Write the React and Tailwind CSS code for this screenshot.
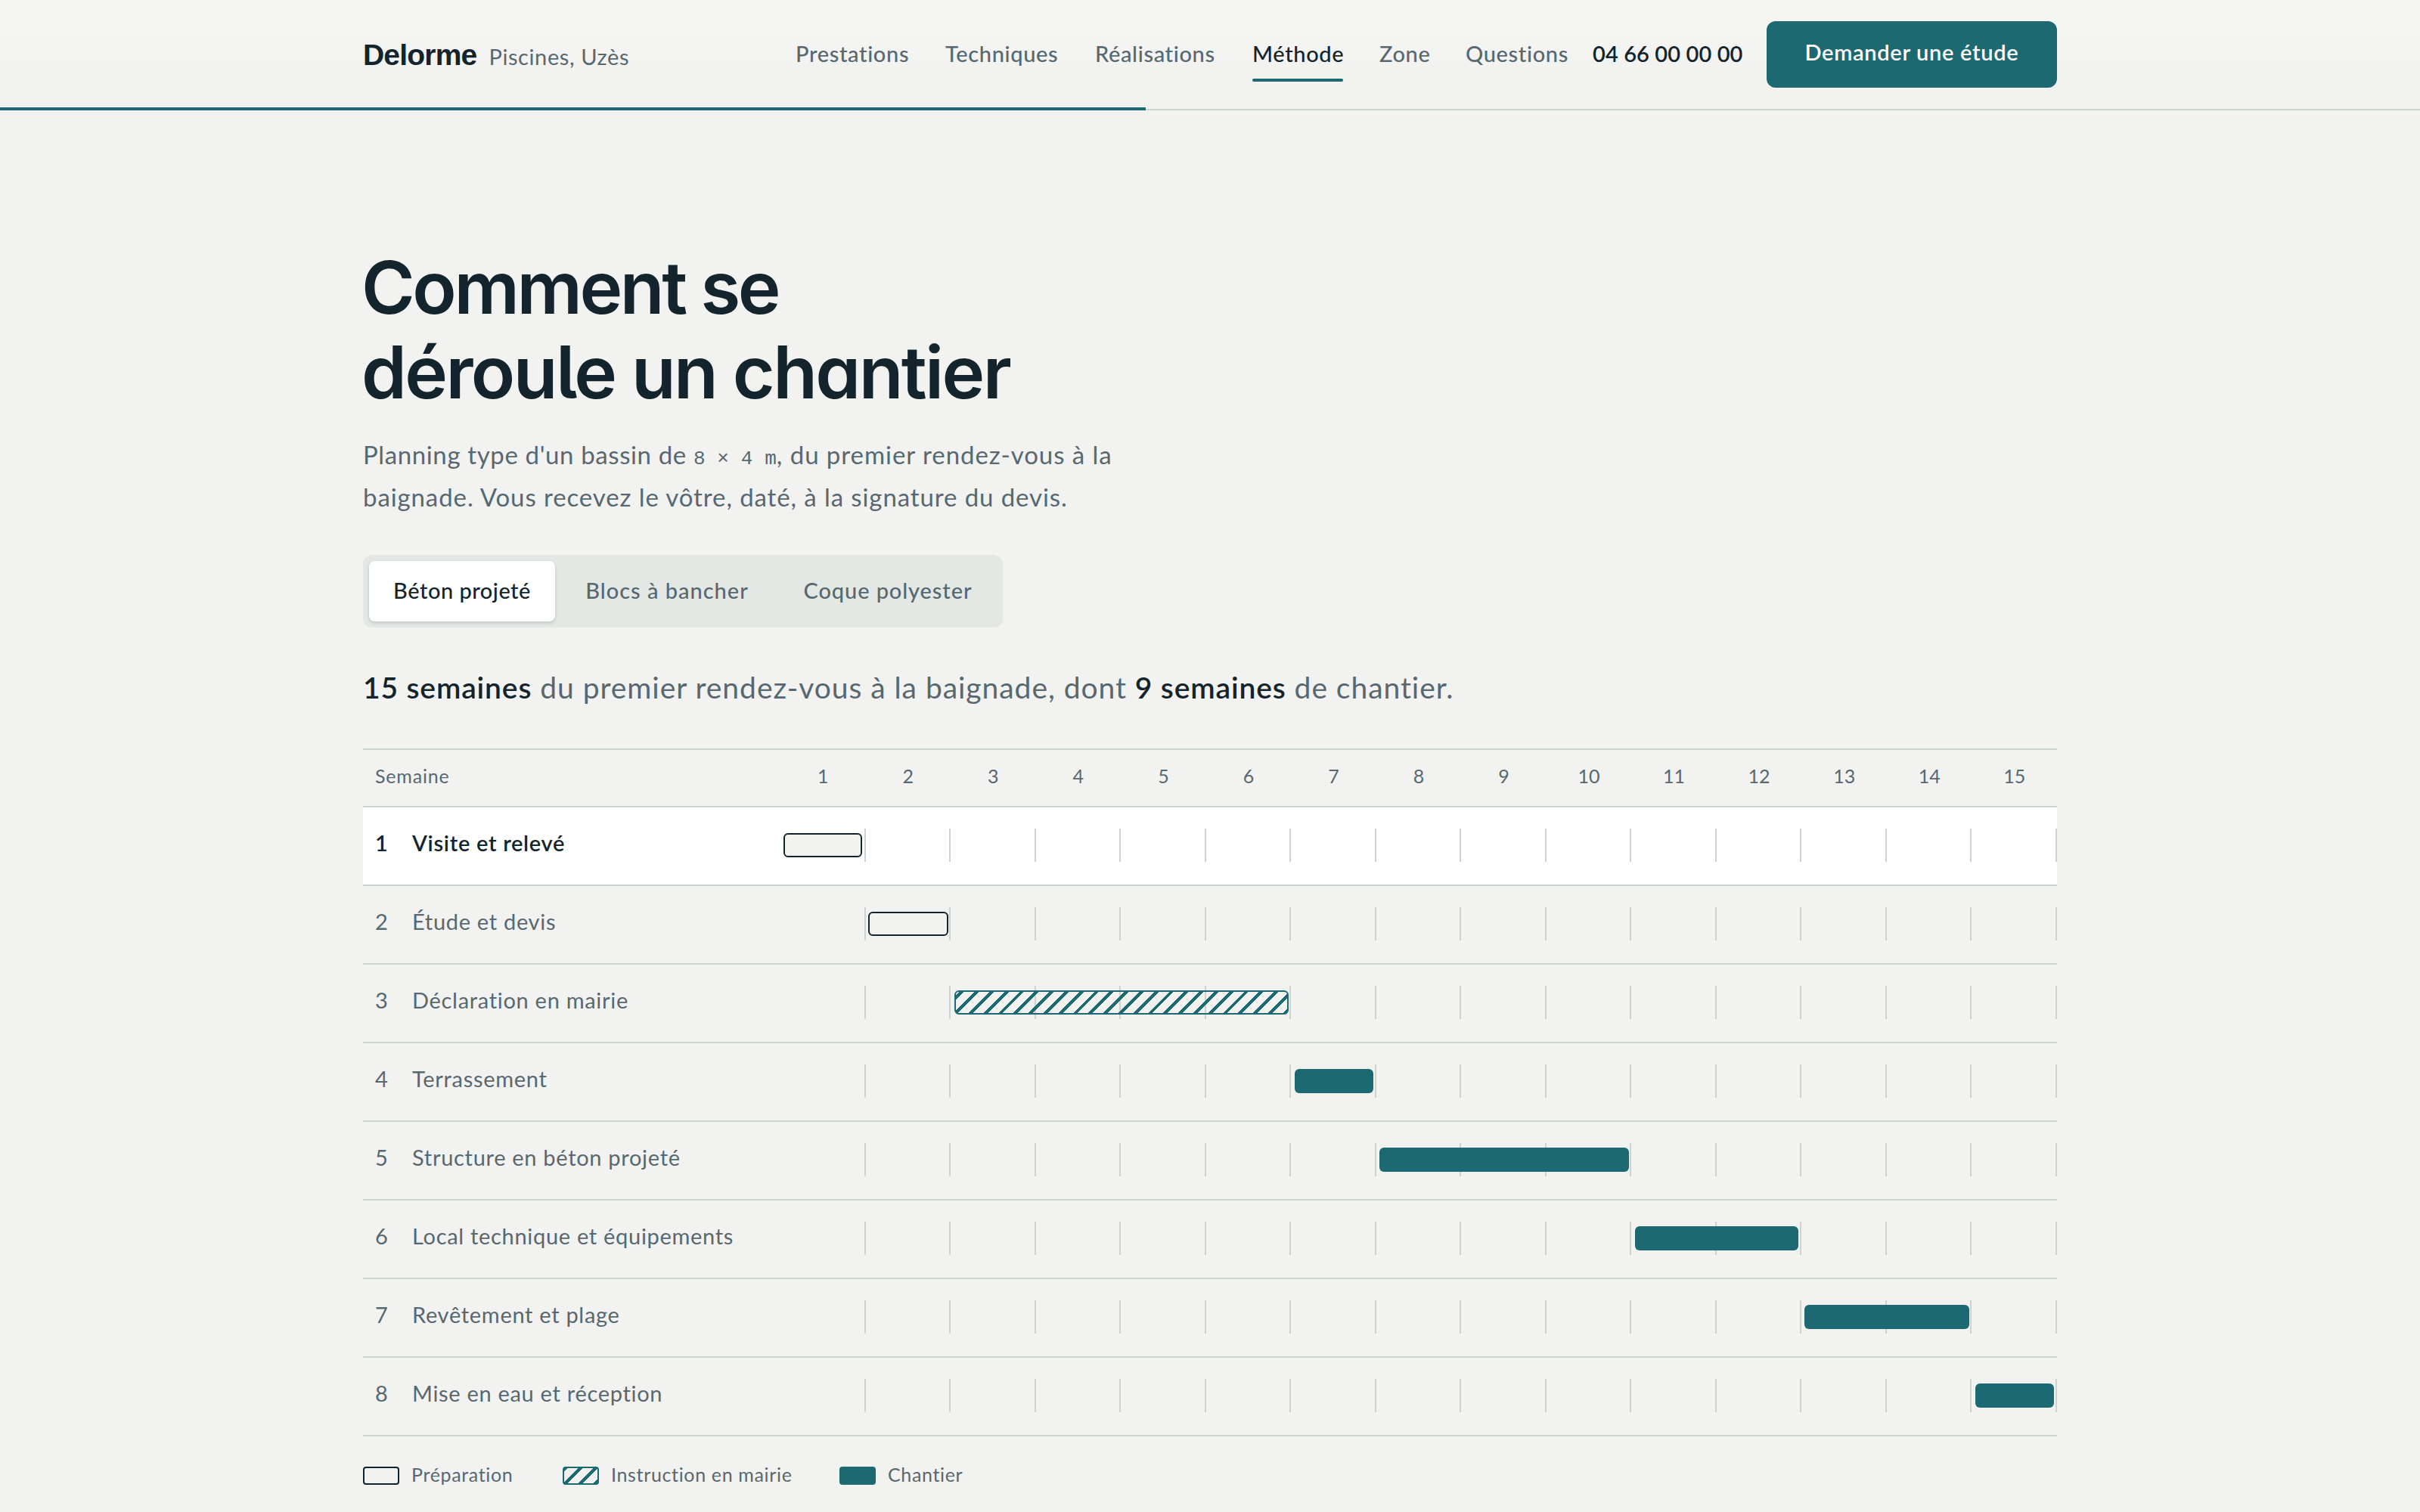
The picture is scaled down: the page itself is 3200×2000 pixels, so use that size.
import React, { useState } from 'react';

const NAV = [
  { name: 'Prestations', width: 'w-[150px]' },
  { name: 'Techniques', width: 'w-[150px]' },
  { name: 'Réalisations', width: 'w-[160px]' },
  { name: 'Méthode', width: 'w-[120px]' },
  { name: 'Zone', width: 'w-[66px]' },
  { name: 'Questions', width: 'w-[134px]' },
];

const METHODS = [
  { name: 'Béton projeté', size: 'w-[246px] tracking-[0.5px]' },
  { name: 'Blocs à bancher', size: 'w-[280px] tracking-[1px]' },
  { name: 'Coque polyester', size: 'w-[288px] tracking-[0.9px]' },
];

const WEEKS = 15;
const WEEK_WIDTH = 1688 / WEEKS;

const STEPS = [
  { name: 'Visite et relevé', from: 1, to: 1, kind: 'prep' },
  { name: 'Étude et devis', from: 2, to: 2, kind: 'prep' },
  { name: 'Déclaration en mairie', from: 3, to: 6, kind: 'admin' },
  { name: 'Terrassement', from: 7, to: 7, kind: 'site' },
  { name: 'Structure en béton projeté', from: 8, to: 10, kind: 'site' },
  { name: 'Local technique et équipements', from: 11, to: 12, kind: 'site' },
  { name: 'Revêtement et plage', from: 13, to: 14, kind: 'site' },
  { name: 'Mise en eau et réception', from: 15, to: 15, kind: 'site' },
];

const KIND_STYLES = {
  prep: 'border-2 border-[#14242c] bg-[#f2f2f0]',
  admin: 'border-2 border-[#1c6972] bg-[repeating-linear-gradient(-45deg,#1c6972_0_4px,transparent_4px_14px)]',
  site: 'bg-[#1c6972]',
};

const LEGEND = [
  { kind: 'prep', label: 'Préparation', width: 'w-[200px]' },
  { kind: 'admin', label: 'Instruction en mairie', width: 'w-[302px]' },
  { kind: 'site', label: 'Chantier', width: 'w-[166px]' },
];

// Keeps bar edges on even pixels, 4px inside the week columns
const snap = (x) => Math.round(x / 2) * 2;

const Header = () => (
  <header className="relative h-[146px] border-b-2 border-[#ccd4cf] bg-linear-to-b from-[#f5f5f3] from-20% to-[#f2f2f0] to-65%">
    <div className="mx-auto flex h-[144px] w-[2240px] items-center justify-between">
      <div className="flex items-baseline gap-4 pt-[3px]">
        <span className="font-['Liberation_Sans'] text-[39px] leading-[48px] font-bold tracking-[-0.8px] text-[#14242c]">Delorme</span>
        <span className="text-[29px] leading-[48px] tracking-[0.6px]">Piscines, Uzès</span>
      </div>
      <div className="flex items-center gap-8">
        <nav className="flex gap-12">
          {NAV.map(({ name, width }) => (
            <a
              key={name}
              className={`relative pb-0.5 text-[29px] leading-[44px] font-medium tracking-[0.65px] whitespace-nowrap ${width} ${name === 'Méthode' ? 'text-[#14242c]' : ''}`}
            >
              {name}
              {name === 'Méthode' && <span className="absolute inset-x-0 -bottom-[13px] h-1 rounded-full bg-[#1c6972]" />}
            </a>
          ))}
        </nav>
        <span className="w-[200px] pb-0.5 pl-0.5 text-[29px] leading-[44px] font-semibold tracking-[0.1px] whitespace-nowrap text-[#14242c]">04 66 00 00 00</span>
        <button className="flex h-[88px] w-[384px] items-center justify-center rounded-xl bg-[#1c6972] pb-1.5 text-[29px] font-semibold tracking-[0.7px] text-white">
          Demander une étude
        </button>
      </div>
    </div>
    {/* Reading progress */}
    <div className="absolute top-[142px] left-0 h-1 w-[1515px] bg-[#1c6972]" />
  </header>
);

const Row = ({ step, index, active }) => {
  const left = snap((step.from - 1) * WEEK_WIDTH + 4);
  const right = snap(step.to * WEEK_WIDTH - 4);
  return (
    <div className={`flex h-[104px] border-b-2 border-[#ccd4cf] ${active ? 'bg-white font-semibold text-[#14242c]' : ''}`}>
      <div className="flex w-[552px] items-center pb-2 pl-4 text-[29px] tracking-[0.7px]">
        <span className="w-[49px]">{index + 1}</span>
        <span>{step.name}</span>
      </div>
      <div className="relative mt-7 flex h-11 w-[1688px]">
        {Array.from({ length: WEEKS }, (_, i) => (
          <span key={i} className="flex-1 border-r-2 border-[#ccd4cf]" />
        ))}
        <span className={`absolute top-1.5 h-8 rounded-md ${KIND_STYLES[step.kind]}`} style={{ left, width: right - left }} />
      </div>
    </div>
  );
};

const App = () => {
  const [method, setMethod] = useState(METHODS[0].name);

  return (
    <div className="h-[2000px] overflow-hidden bg-[#f2f2f0] font-['Lato',sans-serif] text-[#586870]">
      <Header />
      <main className="mx-auto w-[2240px] pt-[178px]">
        <h1 className="-ml-0.5 font-['Inter'] text-[96px] leading-[112px] font-semibold tracking-[-2.6px] text-[#14242c] [font-feature-settings:'cv11','cv05']">
          <span className="tracking-[-3.4px]">Comment se</span>
          <br />
          déroule un chantier
        </h1>
        <p className="mt-[25px] text-[33px] leading-[56px] tracking-[0.9px]">
          <span className="tracking-[0.62px]">Planning type d'un bassin de </span>
          <span className="font-['Liberation_Mono'] text-[26px] leading-none tracking-[0.1px]">8 × 4 m</span>
          <span className="tracking-[0.95px]">, du premier rendez-vous à la</span>
          <br />
          baignade. Vous recevez le vôtre, daté, à la signature du devis.
        </p>

        <div className="mt-[49px] flex h-24 w-[846px] gap-2 rounded-xl bg-[#e3e8e4] p-2">
          {METHODS.map(({ name, size }) => (
            <button
              key={name}
              onClick={() => setMethod(name)}
              className={`shrink-0 rounded-lg pb-0.5 text-[29px] font-medium whitespace-nowrap ${size} ${
                name === method ? 'bg-white text-[#14242c] shadow-[0_2px_4px_rgba(20,36,44,0.18)]' : ''
              }`}
            >
              {name}
            </button>
          ))}
        </div>

        <p className="mt-[49px] text-[39px] leading-[60px] tracking-[0.95px]">
          <strong className="font-semibold tracking-[0.85px] text-[#14242c]">15 semaines</strong> du premier rendez-vous à la baignade, dont{' '}
          <strong className="font-semibold tracking-[0.85px] text-[#14242c]">9 semaines</strong> de chantier.
        </p>

        {/* Planning */}
        <div className="mt-[51px] border-t-2 border-[#ccd4cf]">
          <div className="flex h-[76px] items-center border-b-2 border-[#ccd4cf] pb-1 text-[25px]">
            <span className="w-[552px] pl-4 tracking-[0.8px]">Semaine</span>
            {Array.from({ length: WEEKS }, (_, i) => (
              <span key={i} className="flex-1 text-center">{i + 1}</span>
            ))}
          </div>
          {STEPS.map((step, i) => (
            <Row key={step.name} step={step} index={i} active={i === 0} />
          ))}
        </div>

        <div className="mt-10 flex gap-16">
          {LEGEND.map(({ kind, label, width }) => (
            <div key={kind} className={`flex h-6 items-center gap-4 ${width}`}>
              <span className={`h-6 w-12 shrink-0 rounded ${KIND_STYLES[kind]}`} />
              <span className="pb-1 text-[25px] leading-6 tracking-[0.65px] whitespace-nowrap">{label}</span>
            </div>
          ))}
        </div>
      </main>
    </div>
  );
};

export default App;
